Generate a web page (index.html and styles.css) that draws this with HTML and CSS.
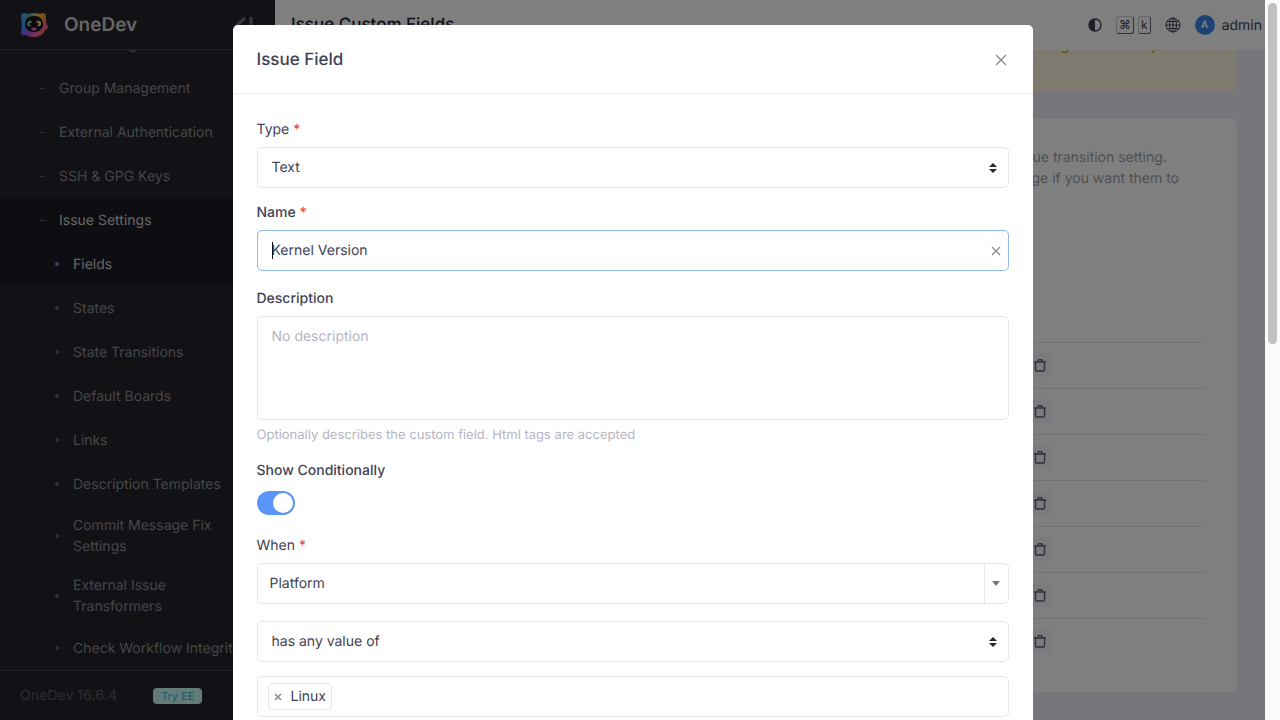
FILE: index.html
```html
<!DOCTYPE html>
<html lang="en">

<head>
  <meta charset="UTF-8" />
  <meta name="viewport" content="width=device-width, initial-scale=1" />
  <title>Issue Custom Fields - OneDev</title>
  <link rel="stylesheet" href="styles.css">
</head>

<body>
  <div class="app">
    <aside class="sidebar">
      <div class="brand">
        <svg class="brand-logo" viewBox="0 0 28 28" aria-hidden="true">
          <defs>
            <linearGradient id="face" x1="0" y1=".3" x2="1" y2=".7">
              <stop offset="0" stop-color="#3f8cff" />
              <stop offset=".3" stop-color="#8a5bff" />
              <stop offset=".6" stop-color="#f05fb0" />
              <stop offset="1" stop-color="#ff7a3c" />
            </linearGradient>
            <linearGradient id="ears" x1="0" y1="0" x2="1" y2="0">
              <stop offset="0" stop-color="#2f98ff" />
              <stop offset=".4" stop-color="#5fc08a" />
              <stop offset=".7" stop-color="#ffc22e" />
              <stop offset="1" stop-color="#ff6a3c" />
            </linearGradient>
          </defs>
          <path d="M2 15L1 5q0-3 3-3 2 0 4 1 6-2 12 0l3-1q3 0 3 3v5l1 6z" fill="url(#ears)" />
          <path d="M2 13l-1 9q0 3 4 2 4 2 9 2 9 0 11-7 3-1 3-4-1-2-3-2z" fill="url(#face)" />
          <path d="M14 5c-6 0-9 3-9 8 0 4 3 8 9 8s9-4 9-8c0-5-3-8-9-8z" fill="#16151d" />
          <path d="M8 11q3-3 4 0l-1 4q-3 1-4-1z" fill="#66d0b0" />
          <path d="M16 11q3-3 5 0v3q-2 2-4 1z" fill="#f0d060" />
          <circle cx="11" cy="13" r="1.500" fill="#16151d" />
          <circle cx="17" cy="13" r="1.500" fill="#16151d" />
          <path d="M11 17q3-1 6 0-1 3-3 3t-3-3z" fill="#e070b0" />
        </svg>
        <span class="brand-name">OneDev</span>
        <button class="brand-toggle" type="button" aria-label="Collapse menu">
          <svg width="18" height="18" viewBox="0 0 18 18">
            <path d="M10 2L2 9l8 7M16 1v16" />
          </svg>
        </button>
      </div>
      <nav class="menu">
        <a class="menu-item" href="#">Role Management</a>
        <a class="menu-item" href="#">Group Management</a>
        <a class="menu-item" href="#">External Authentication</a>
        <a class="menu-item" href="#">SSH &amp; GPG Keys</a>
        <a class="menu-item active" href="#">Issue Settings</a>
        <a class="menu-item sub active" href="#">Fields</a>
        <a class="menu-item sub" href="#">States</a>
        <a class="menu-item sub" href="#">State Transitions</a>
        <a class="menu-item sub" href="#">Default Boards</a>
        <a class="menu-item sub" href="#">Links</a>
        <a class="menu-item sub" href="#">Description Templates</a>
        <a class="menu-item sub tall" href="#">Commit Message Fix Settings</a>
        <a class="menu-item sub tall" href="#">External Issue Transformers</a>
        <a class="menu-item sub" href="#">Check Workflow Integrity</a>
      </nav>
      <div class="sidebar-footer">
        <span>OneDev 16.6.4</span>
        <a class="try-ee" href="#">Try EE</a>
      </div>
    </aside>

    <div class="main">
      <header class="topbar">
        <h1 class="page-title">Issue Custom Fields</h1>
        <button class="icon-btn" type="button" aria-label="Dark mode">
          <svg width="14" height="14" viewBox="0 0 14 14">
            <circle cx="7" cy="7" r="6" fill="none" stroke="currentColor" stroke-width="1.4" />
            <path d="M7 1a6 6 0 0 0 0 12z" fill="currentColor" />
          </svg>
        </button>
        <span class="keys"><kbd>⌘</kbd><kbd>k</kbd></span>
        <button class="icon-btn" type="button" aria-label="Language">
          <svg width="16" height="16" viewBox="0 0 16 16" fill="none" stroke="currentColor">
            <circle cx="8" cy="8" r="7" />
            <ellipse cx="8" cy="8" rx="3.5" ry="7" />
            <path d="M8 1v14M1 8h14M2 4.5h12M2 11.5h12" />
          </svg>
        </button>
        <a class="user" href="#"><span class="avatar">A</span>admin</a>
      </header>

      <div class="content">
        <div class="alert">
          Some issues use fields which are no longer defined or were changed, and need to be reconciled to avoid being unnecessary
          reported. Run the check to fix them
        </div>
        <section class="card">
          <p class="note">Define all custom issue fields here. Each project can decide to use all or a subset of these fields via its issue transition setting.</p>
          <p class="note">NOTE: Newly defined fields by default only appear in new issues. Batch edit existing issues from issue page if you want them to have these new fields</p>
          <table class="fields">
            <thead>
              <tr><th>Name</th><th>Type</th><th></th></tr>
            </thead>
            <tbody id="fields"></tbody>
          </table>
        </section>
      </div>
    </div>
  </div>

  <div class="backdrop">
    <div class="modal" role="dialog" aria-labelledby="modal-title">
      <div class="modal-header">
        <h2 class="modal-title" id="modal-title">Issue Field</h2>
        <button class="close" type="button" aria-label="Close">
          <svg width="12" height="12" viewBox="0 0 12 12"><path d="M1 1l10 10M11 1L1 11" /></svg>
        </button>
      </div>
      <form class="modal-body">
        <div class="field">
          <label for="type">Type <span class="required">*</span></label>
          <div class="control">
            <select id="type"><option>Text</option></select>
            <svg class="sort" width="8" height="10" viewBox="0 0 8 10"><path d="M0 4l4-4 4 4zM0 6h8l-4 4z" /></svg>
          </div>
        </div>
        <div class="field roomy">
          <label class="strong" for="name">Name <span class="required">*</span></label>
          <div class="control focused">
            <span class="caret"></span>
            <input id="name" type="text" value="Kernel Version">
            <button class="close clear" type="button" aria-label="Clear">
              <svg width="10" height="10" viewBox="0 0 10 10"><path d="M1 1l8 8M9 1L1 9" /></svg>
            </button>
          </div>
        </div>
        <div class="field roomy">
          <label class="strong" for="description">Description</label>
          <textarea id="description" placeholder="No description"></textarea>
          <small class="help">Optionally describes the custom field. Html tags are accepted</small>
        </div>
        <div class="field roomy">
          <label class="strong" for="conditional">Show Conditionally</label>
          <input class="switch" id="conditional" type="checkbox" checked>
        </div>
        <div class="field roomy">
          <label for="when">When <span class="required">*</span></label>
          <div class="control choice">
            <select id="when"><option>Platform</option></select>
            <span class="arrow"></span>
          </div>
        </div>
        <div class="field">
          <div class="control">
            <select aria-label="Condition"><option>has any value of</option></select>
            <svg class="sort" width="8" height="10" viewBox="0 0 8 10"><path d="M0 4l4-4 4 4zM0 6h8l-4 4z" /></svg>
          </div>
        </div>
        <div class="field">
          <div class="control tags">
            <span class="tag">
              <button type="button" aria-label="Remove Linux">
                <svg width="8" height="8" viewBox="0 0 8 8"><path d="M1 1l6 6M7 1L1 7" /></svg>
              </button>
              Linux
            </span>
          </div>
        </div>
      </form>
    </div>
  </div>

  <div class="scrollbar"><div class="scrollbar-thumb"></div></div>

  <script>
    const fields = ["Type", "Priority", "Assignees", "Platform", "Kernel Version", "Severity", "Failed Build"];
    const tbody = document.getElementById("fields");

    fields.forEach(field => {
      const tr = document.createElement("tr");
      tr.innerHTML = `
        <td>${field}</td>
        <td></td>
        <td>
          <button class="trash" type="button" aria-label="Delete ${field}">
            <svg width="12" height="14" viewBox="0 0 12 14"><path d="M0 4h12M1.500 4v8q0 1 1 1h7q1 0 1-1V4M3.500 4Q3.500 1.500 6 1.500T8.500 4" /></svg>
          </button>
        </td>
      `;
      tbody.appendChild(tr);
    });
  </script>
</body>

</html>
```

FILE: styles.css
```css
* {
  box-sizing: border-box;
}

body {
  margin: 0;
  font-family: Inter, "Liberation Sans", sans-serif;
  font-size: 14px;
  line-height: 21px;
  color: #3f4254;
  text-rendering: geometricPrecision;
  overflow: hidden;
}

button,
input,
select,
textarea {
  font: inherit;
  color: inherit;
  text-rendering: inherit;
}

button {
  border: none;
  background: none;
  padding: 0;
  cursor: pointer;
}

a {
  color: inherit;
  text-decoration: none;
}

.app {
  display: flex;
  height: 100vh;
  padding-right: 15px;
}

/* sidebar */
.sidebar {
  display: flex;
  flex-direction: column;
  flex: 0 0 275px;
  background-color: #24232a;
  color: #8a8a92;
}

.brand {
  display: flex;
  align-items: center;
  flex: 0 0 50px;
  padding: 0 22px 0 20px;
  border-bottom: 1px solid #43434c;
}

.brand-logo {
  width: 28px;
  height: 28px;
}

.brand-name {
  flex-grow: 1;
  margin-left: 16px;
  font-size: 19px;
  font-weight: 600;
  color: #ccc;
}

.brand-toggle svg {
  display: block;
  fill: none;
  stroke: #70707a;
  stroke-width: 3;
}

.menu {
  display: flex;
  flex-direction: column;
  justify-content: flex-end;
  flex: 1 1 0;
  min-height: 0;
  overflow: hidden;
}

.menu-item {
  display: flex;
  align-items: center;
  flex: 0 0 44px;
  padding: 0 30px 0 40px;
}

.menu-item::before {
  content: "";
  flex: 0 0 5px;
  height: 1px;
  margin-right: 14px;
  background-color: #5c5c68;
}

.menu-item.sub {
  padding-left: 55px;
}

.menu-item.sub::before {
  flex-basis: 4px;
  height: 4px;
  border-radius: 50%;
}

.menu-item.tall {
  flex-basis: 60px;
}

.menu-item.active {
  background-color: #1c1b23;
  color: #ccc;
}

.menu-item.sub.active::before {
  background-color: #4f8fd8;
}

.sidebar-footer {
  display: flex;
  align-items: center;
  flex: 0 0 50px;
  gap: 36px;
  padding: 0 20px;
  border-top: 1px solid #43434c;
  color: #55545f;
  font-weight: 500;
}

.try-ee {
  padding: 0 8px;
  border-radius: 4px;
  background-color: #c9f7f5;
  color: #1bc5bd;
  font-size: 11px;
  font-weight: 400;
  line-height: 16px;
}

/* page behind the dialog */
.main {
  display: flex;
  flex-direction: column;
  flex: 1;
  min-width: 0;
  background-color: #eceef4;
}

.topbar {
  display: flex;
  align-items: center;
  flex: 0 0 50px;
  gap: 14px;
  padding: 0 3px 0 16px;
  background-color: #fff;
}

.page-title {
  flex-grow: 1;
  margin: 0;
  font-size: 17px;
  font-weight: 500;
  color: #181c32;
}

.icon-btn svg {
  display: block;
}

.keys {
  display: flex;
  gap: 4px;
}

kbd {
  padding: 0 2px;
  border: 1px solid #5e6278;
  border-top-color: #ccc;
  border-left-color: #ccc;
  border-radius: 3px;
  font: 12px/16px Inter, "DejaVu Sans", sans-serif;
}

.user {
  display: flex;
  align-items: center;
  gap: 7px;
}

.avatar {
  width: 20px;
  border-radius: 50%;
  background-color: #3b87e6;
  color: #fff;
  font-size: 10px;
  font-weight: 600;
  line-height: 20px;
  text-align: center;
}

.content {
  display: flex;
  flex-direction: column;
  justify-content: flex-end;
  flex: 1 1 0;
  min-height: 0;
  gap: 28px;
  padding: 0 28px 28px;
  overflow: hidden;
}

.alert {
  flex-shrink: 0;
  padding: 14px 32px;
  border-radius: 5px;
  background-color: #fff4de;
  color: #d99a1c;
}

.card {
  flex-shrink: 0;
  padding: 28px 32px;
  border-radius: 5px;
  background-color: #fff;
}

.note {
  margin: 0;
  color: #a0a1a8;
}

.fields {
  width: 100%;
  margin-top: 86px;
  border-collapse: collapse;
}

.fields th {
  height: 46px;
  text-align: left;
}

.fields td {
  height: 46px;
  padding: 0;
  border-top: 1px solid #e4e6ef;
}

.fields td:last-child {
  width: 177px;
}

.trash {
  display: flex;
  align-items: center;
  justify-content: center;
  width: 24px;
  height: 24px;
  border-radius: 4px;
  background-color: #f3f6f9;
}

.trash svg {
  fill: none;
  stroke: #5e6278;
  stroke-width: 1.4;
}

/* dialog */
.backdrop {
  position: fixed;
  inset: 0 15px 0 0;
  padding-top: 25px;
  background-color: rgba(0, 0, 0, 0.5);
  overflow: hidden;
}

.modal {
  max-width: 800px;
  margin: 0 auto;
  border-radius: 5px;
  background-color: #fff;
}

.modal-header {
  display: flex;
  align-items: center;
  justify-content: space-between;
  height: 69px;
  padding: 2px 26px 0 24px;
  border-bottom: 1px solid #ebedf3;
}

.modal-title {
  margin: 0;
  font-size: 17px;
  font-weight: 500;
}

.close svg {
  display: block;
  fill: none;
  stroke: #888;
  stroke-width: 1.3;
}

.modal-body {
  padding: 25px 24px;
}

.field {
  display: flex;
  flex-direction: column;
  gap: 7px;
  margin-bottom: 14px;
}

.field.roomy {
  margin-bottom: 17px;
}

.field label.strong {
  font-weight: 500;
}

.required {
  color: #e0474c;
}

.control {
  display: flex;
  align-items: center;
  position: relative;
  height: 41px;
  border: 1px solid #e4e6ef;
  border-radius: 5px;
}

.control.focused {
  border-color: #8fb8ea;
}

.control select,
.control input {
  flex: 1;
  min-width: 0;
  height: 39px;
  padding: 0 14px;
  border: none;
  background: none;
  outline: none;
  appearance: none;
}

.control.choice select {
  padding: 0 12px;
}

.sort {
  margin-right: 11px;
  fill: #23242f;
}

.caret {
  position: absolute;
  left: 14px;
  width: 1px;
  height: 17px;
  background-color: #111;
}

.clear {
  margin-right: 7px;
}

.arrow {
  display: flex;
  align-items: center;
  justify-content: center;
  align-self: stretch;
  width: 24px;
  border-left: 1px solid #e4e6ef;
}

.arrow::before {
  content: "";
  border: 4px solid transparent;
  border-top: 5px solid #777;
  border-bottom: none;
}

textarea {
  display: block;
  height: 104px;
  padding: 9px 14px;
  border: 1px solid #e4e6ef;
  border-radius: 5px;
  resize: none;
}

textarea::placeholder {
  color: #b5b5c3;
}

.help {
  font-size: 13px;
  line-height: 16px;
  color: #b5b5c3;
}

.switch {
  display: flex;
  align-items: center;
  justify-content: flex-end;
  appearance: none;
  width: 38px;
  height: 24px;
  margin: 3px 0;
  padding: 2px;
  border-radius: 12px;
  background-color: #5b95f9;
}

.switch::before {
  content: "";
  width: 20px;
  height: 20px;
  border-radius: 50%;
  background-color: #fff;
}

.tags {
  padding: 0 10px;
}

.tag {
  display: flex;
  align-items: center;
  gap: 9px;
  height: 27px;
  padding: 0 5px;
  border: 1px solid #e4e6ef;
  border-radius: 4px;
}

.tag svg {
  display: block;
  fill: none;
  stroke: #888;
  stroke-width: 1.5;
}

/* page scrollbar */
.scrollbar {
  position: fixed;
  inset: 0 0 0 auto;
  width: 15px;
  padding: 3px;
  background-color: #fafafa;
}

.scrollbar-thumb {
  width: 9px;
  height: 341px;
  border-radius: 5px;
  background-color: #c1c1c1;
}
```
